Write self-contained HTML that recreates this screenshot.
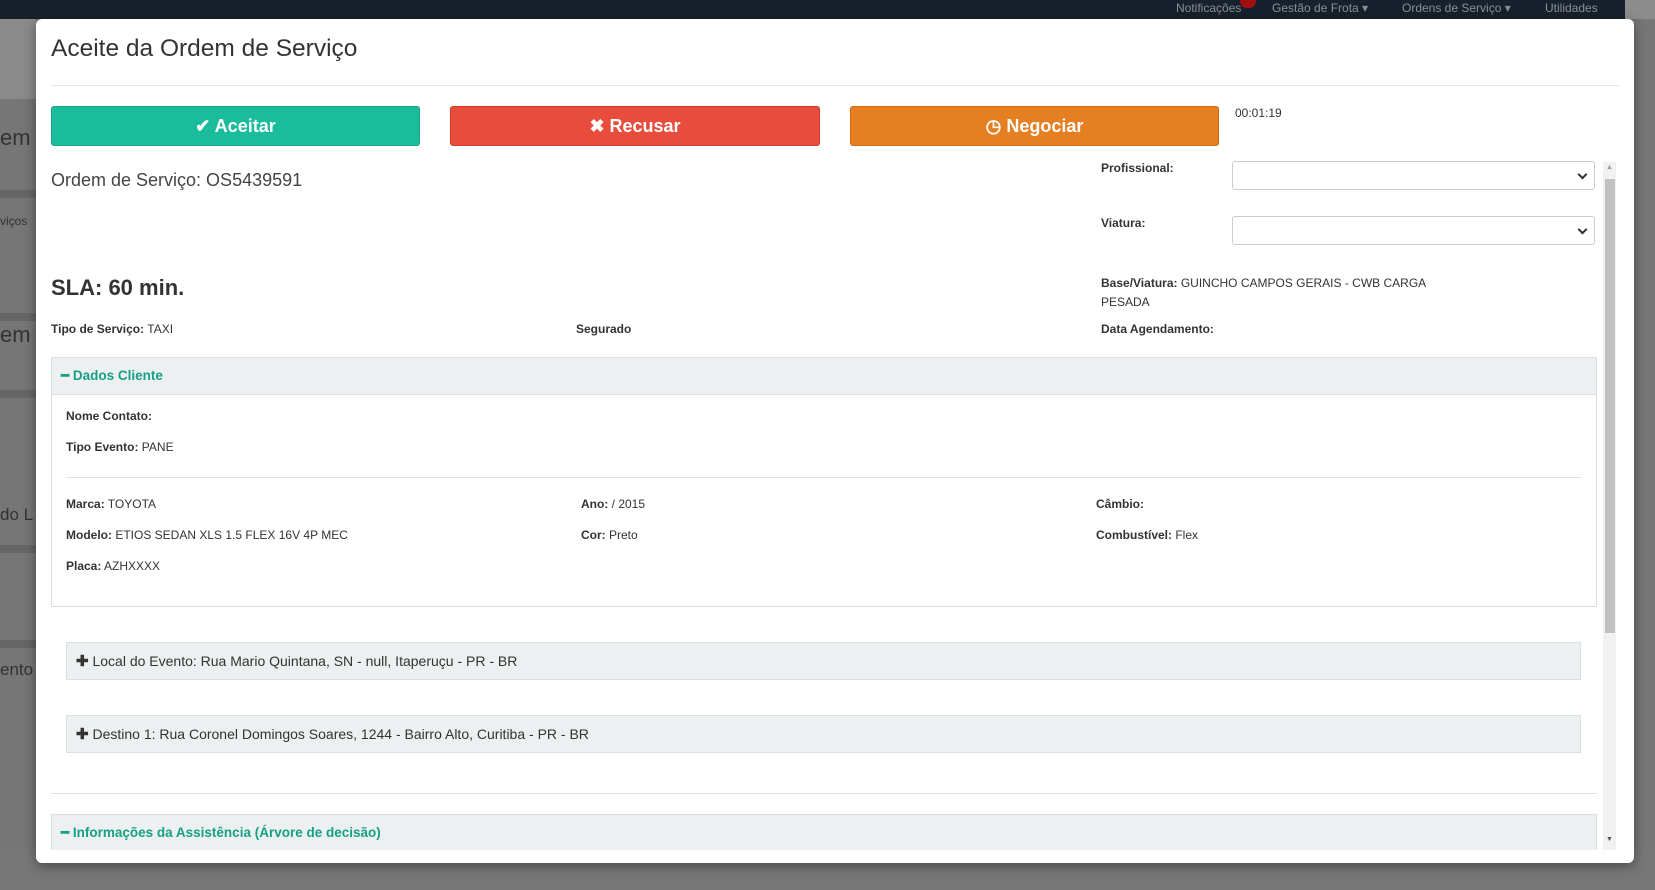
<!DOCTYPE html>
<html><head><meta charset="utf-8">
<style>
*{box-sizing:border-box;margin:0;padding:0}
body{width:1655px;height:890px;overflow:hidden;font-family:"Liberation Sans",Arial,sans-serif;background:#767676;position:relative;color:#333}
.nav{position:absolute;left:0;top:0;width:1655px;height:19px;background:#18202b}
.nav span{position:absolute;top:1px;font-size:12px;color:#8a9099}
.abs{position:absolute}
.modal{position:absolute;left:36px;top:19px;width:1598px;height:844px;background:#fff;border-radius:6px;box-shadow:0 3px 12px rgba(0,0,0,.4);overflow:hidden}
.m{position:absolute}
.btn{position:absolute;top:87px;height:40px;border-radius:3px;color:#fff;font-weight:bold;font-size:18px;text-align:center;line-height:38px}
.lbl{font-size:12px;color:#333}
.lbl b{font-weight:bold}
.sel{position:absolute;left:1196px;width:363px;height:29px;border:1px solid #ccc;border-radius:3px;background:#fff}
.sel:after{content:"";position:absolute;right:8px;top:9px;width:5px;height:5px;border-right:2px solid #333;border-bottom:2px solid #333;transform:rotate(45deg)}
.ph{background:#ecf0f1;border:1px solid #dcdfe0}
.green{color:#16a085;font-weight:bold;font-size:13.5px}
</style></head><body>
<div class="nav">
<span style="left:1176px">Notificações</span>
<div class="abs" style="left:1240px;top:-6px;width:16px;height:14px;border-radius:8px;background:#a01010"></div>
<span style="left:1272px">Gestão de Frota ▾</span>
<span style="left:1402px">Ordens de Serviço ▾</span>
<span style="left:1545px">Utilidades</span>
<div class="abs" style="left:1625px;top:0;width:30px;height:19px;background:#8d8d8d"></div>
</div>
<div class="abs" style="left:0;top:19px;width:36px;height:80px;background:#8a8a8a"></div>
<div class="abs" style="left:0;top:190px;width:36px;height:8px;background:#666"></div>
<div class="abs" style="left:0;top:313px;width:36px;height:8px;background:#666"></div>
<div class="abs" style="left:0;top:390px;width:36px;height:8px;background:#666"></div>
<div class="abs" style="left:0;top:545px;width:36px;height:8px;background:#666"></div>
<div class="abs" style="left:0;top:640px;width:36px;height:8px;background:#666"></div>
<div class="abs" style="left:0;top:848px;width:1655px;height:42px;background:#777"></div>
<div class="abs" style="left:0;top:125px;font-size:22px;color:#333">em</div>
<div class="abs" style="left:0;top:322px;font-size:22px;color:#333">em</div>
<div class="abs" style="left:0;top:505px;font-size:17px;color:#333">do L</div>
<div class="abs" style="left:0;top:660px;font-size:17px;color:#333">ento</div>
<div class="abs" style="left:0;top:214px;font-size:12px;color:#333">viços</div>

<div class="modal">
 <div class="m" style="left:15px;top:16px;font-size:24.5px;color:#333">Aceite da Ordem de Serviço</div>
 <div class="m" style="left:15px;top:66px;width:1568px;height:1px;background:#e5e5e5"></div>
 <div class="btn" style="left:15px;width:369px;background:#1abc9c;border:1px solid #18a689">✔ Aceitar</div>
 <div class="btn" style="left:414px;width:370px;background:#e74c3c;border:1px solid #d0392a">✖ Recusar</div>
 <div class="btn" style="left:814px;width:369px;background:#e67e22;border:1px solid #d26a0e">◷ Negociar</div>
 <div class="m" style="left:1199px;top:87px;font-size:12px;color:#333">00:01:19</div>

 <div class="m" style="left:15px;top:151px;font-size:18px;color:#444">Ordem de Serviço: OS5439591</div>
 <div class="m lbl" style="left:1065px;top:142px"><b>Profissional:</b></div>
 <div class="sel" style="top:142px"></div>
 <div class="m lbl" style="left:1065px;top:197px"><b>Viatura:</b></div>
 <div class="sel" style="top:197px"></div>
 <div class="m" style="left:15px;top:256px;font-size:22px;font-weight:bold;color:#333">SLA: 60 min.</div>
 <div class="m lbl" style="left:1065px;top:255px;line-height:19px"><b>Base/Viatura:</b> GUINCHO CAMPOS GERAIS - CWB CARGA<br>PESADA</div>
 <div class="m lbl" style="left:15px;top:303px"><b>Tipo de Serviço:</b> TAXI</div>
 <div class="m lbl" style="left:540px;top:303px"><b>Segurado</b></div>
 <div class="m lbl" style="left:1065px;top:303px"><b>Data Agendamento:</b></div>

 <div class="m" style="left:1567px;top:143px;width:13px;height:688px;background:#f1f1f1"></div>
 <div class="m" style="left:1569px;top:160px;width:10px;height:454px;background:#c1c1c1"></div>
 <div class="m" style="left:1570px;top:145px;font-size:7px;color:#999">▲</div>
 <div class="m" style="left:1570px;top:817px;font-size:7px;color:#555">▼</div>

 <div class="m" style="left:15px;top:338px;width:1546px;height:250px;border:1px solid #dcdfe0"></div>
 <div class="m ph" style="left:15px;top:338px;width:1546px;height:38px"></div>
 <div class="m green" style="left:25px;top:349px">━ Dados Cliente</div>
 <div class="m lbl" style="left:30px;top:390px"><b>Nome Contato:</b></div>
 <div class="m lbl" style="left:30px;top:421px"><b>Tipo Evento:</b> PANE</div>
 <div class="m" style="left:30px;top:458px;width:1515px;height:1px;background:#e0e0e0"></div>
 <div class="m lbl" style="left:30px;top:478px"><b>Marca:</b> TOYOTA</div>
 <div class="m lbl" style="left:30px;top:509px"><b>Modelo:</b> ETIOS SEDAN XLS 1.5 FLEX 16V 4P MEC</div>
 <div class="m lbl" style="left:30px;top:540px"><b>Placa:</b> AZHXXXX</div>
 <div class="m lbl" style="left:545px;top:478px"><b>Ano:</b> / 2015</div>
 <div class="m lbl" style="left:545px;top:509px"><b>Cor:</b> Preto</div>
 <div class="m lbl" style="left:1060px;top:478px"><b>Câmbio:</b></div>
 <div class="m lbl" style="left:1060px;top:509px"><b>Combustível:</b> Flex</div>

 <div class="m ph" style="left:30px;top:623px;width:1515px;height:38px"></div>
 <div class="m" style="left:40px;top:633px;font-size:14px;color:#333"><b style="font-size:15px">✚</b> Local do Evento: Rua Mario Quintana, SN - null, Itaperuçu - PR - BR</div>
 <div class="m ph" style="left:30px;top:696px;width:1515px;height:38px"></div>
 <div class="m" style="left:40px;top:706px;font-size:14px;color:#333"><b style="font-size:15px">✚</b> Destino 1: Rua Coronel Domingos Soares, 1244 - Bairro Alto, Curitiba - PR - BR</div>

 <div class="m" style="left:15px;top:774px;width:1546px;height:1px;background:#e0e0e0"></div>
 <div class="m ph" style="left:15px;top:795px;width:1546px;height:36px;border-bottom:none"></div>
 <div class="m green" style="left:25px;top:806px">━ Informações da Assistência (Árvore de decisão)</div>
</div>
</body></html>
